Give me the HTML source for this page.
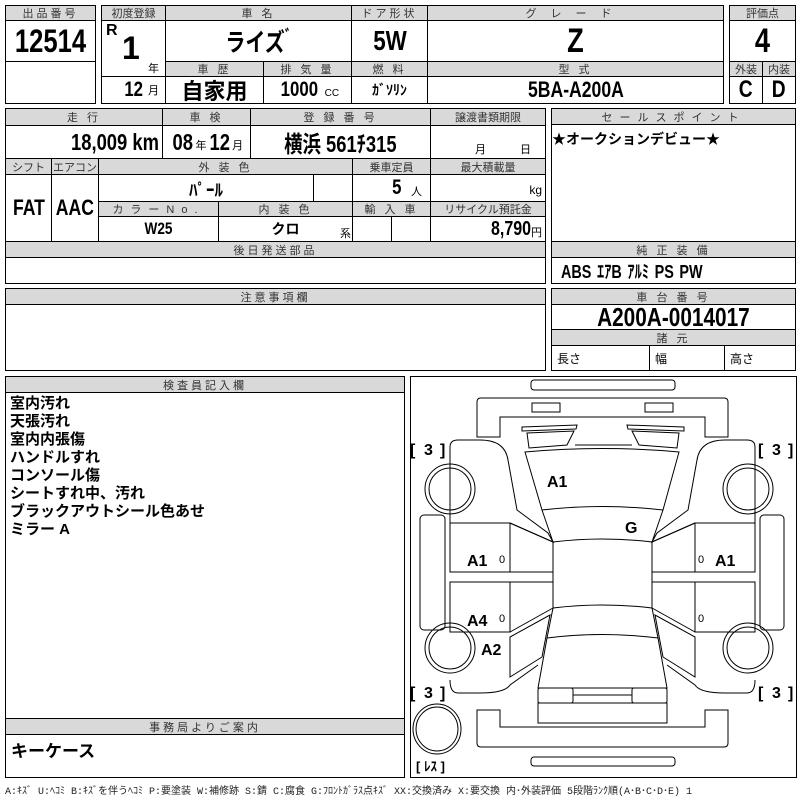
<!DOCTYPE html>
<html><head><meta charset="utf-8"><style>
*{box-sizing:border-box;margin:0;padding:0}
body{width:800px;height:800px;background:#fff;position:relative;overflow:hidden;font-family:"Liberation Sans","Noto Sans CJK JP",sans-serif;color:#000}
.c{position:absolute;border:1px solid #000;display:flex;align-items:center;justify-content:center;white-space:nowrap;overflow:hidden}
.h{background:#d9d9d9;font-size:11px;color:#333;letter-spacing:3px}
.b{font-weight:bold}
.n{display:inline-block;transform:scaleX(.8);font-weight:bold}
.nr{transform-origin:right center}
.t{position:absolute;white-space:nowrap}
</style></head><body>

<!-- box 1 -->
<div class="c h" style="left:5px;top:5px;width:91px;height:16px">出品番号</div>
<div class="c" style="left:5px;top:20px;width:91px;height:42px;font-size:32px"><span class="n">12514</span></div>
<div class="c" style="left:5px;top:61px;width:91px;height:43px"></div>

<!-- box 2 -->
<div class="c h" style="left:101px;top:5px;width:65px;height:16px;letter-spacing:0">初度登録</div>
<div class="c h" style="left:165px;top:5px;width:187px;height:16px">車 名</div>
<div class="c h" style="left:351px;top:5px;width:77px;height:16px">ドア形状</div>
<div class="c h" style="left:427px;top:5px;width:297px;height:16px;letter-spacing:14px">グレード</div>
<div class="c" style="left:101px;top:20px;width:65px;height:57px"></div>
<div class="t b" style="left:106px;top:22px;font-size:16px">R</div>
<div class="t b" style="left:122px;top:30px;font-size:32px">1</div>
<div class="t" style="left:148px;top:60px;font-size:11px">年</div>
<div class="c" style="left:165px;top:20px;width:187px;height:42px;font-size:25px"><span class="n">ライズ<span style="font-size:18px;vertical-align:top">ﾞ</span></span></div>
<div class="c" style="left:351px;top:20px;width:77px;height:42px;font-size:28px"><span class="n">5W</span></div>
<div class="c" style="left:427px;top:20px;width:297px;height:42px;font-size:34px"><span class="n">Z</span></div>
<div class="c h" style="left:165px;top:61px;width:99px;height:16px">車 歴</div>
<div class="c h" style="left:263px;top:61px;width:89px;height:16px">排 気 量</div>
<div class="c h" style="left:351px;top:61px;width:77px;height:16px">燃 料</div>
<div class="c h" style="left:427px;top:61px;width:297px;height:16px">型 式</div>
<div class="c" style="left:101px;top:76px;width:65px;height:28px;justify-content:flex-end;padding-right:6px"><span class="n" style="font-size:21px">12</span><span style="font-size:11px;margin-left:3px">月</span></div>
<div class="c" style="left:165px;top:76px;width:99px;height:28px;font-size:22px;font-weight:bold">自家用</div>
<div class="c" style="left:263px;top:76px;width:89px;height:28px"><span class="n" style="font-size:21px">1000</span><span style="font-size:10px;margin-left:2px;margin-top:6px">CC</span></div>
<div class="c" style="left:351px;top:76px;width:77px;height:28px;font-size:14px;font-weight:bold">ｶﾞｿﾘﾝ</div>
<div class="c" style="left:427px;top:76px;width:297px;height:28px;font-size:22px"><span class="n">5BA-A200A</span></div>

<!-- box 3 -->
<div class="c h" style="left:729px;top:5px;width:67px;height:16px;letter-spacing:0">評価点</div>
<div class="c" style="left:729px;top:20px;width:67px;height:42px;font-size:34px"><span class="n">4</span></div>
<div class="c h" style="left:729px;top:61px;width:34px;height:16px;letter-spacing:0">外装</div>
<div class="c h" style="left:762px;top:61px;width:34px;height:16px;letter-spacing:0">内装</div>
<div class="c" style="left:729px;top:76px;width:34px;height:28px;font-size:24px"><span class="n">C</span></div>
<div class="c" style="left:762px;top:76px;width:34px;height:28px;font-size:24px"><span class="n">D</span></div>

<!-- section 2 -->
<div class="c h" style="left:5px;top:108px;width:158px;height:18px">走 行</div>
<div class="c h" style="left:162px;top:108px;width:89px;height:18px">車 検</div>
<div class="c h" style="left:250px;top:108px;width:181px;height:18px">登 録 番 号</div>
<div class="c h" style="left:430px;top:108px;width:116px;height:18px;letter-spacing:0">譲渡書類期限</div>
<div class="c" style="left:5px;top:125px;width:158px;height:34px;justify-content:flex-end;padding-right:3px"><span class="n nr" style="font-size:23px">18,009 km</span></div>
<div class="c" style="left:162px;top:125px;width:89px;height:34px"><span class="n" style="font-size:23px">08</span><span style="font-size:11px;margin:6px 0 0">年</span><span class="n" style="font-size:23px">12</span><span style="font-size:11px;margin:6px 0 0">月</span></div>
<div class="c" style="left:250px;top:125px;width:181px;height:34px;font-size:23px"><span class="n">横浜 561ﾁ315</span></div>
<div class="c" style="left:430px;top:125px;width:116px;height:34px;font-size:11px;padding-top:14px"><span style="margin-left:30px">月</span><span style="margin-left:34px">日</span></div>

<div class="c h" style="left:5px;top:158px;width:47px;height:17px;letter-spacing:0">シフト</div>
<div class="c h" style="left:51px;top:158px;width:48px;height:17px;letter-spacing:0">エアコン</div>
<div class="c h" style="left:98px;top:158px;width:255px;height:17px">外 装 色</div>
<div class="c h" style="left:352px;top:158px;width:79px;height:17px;letter-spacing:0">乗車定員</div>
<div class="c h" style="left:430px;top:158px;width:116px;height:17px;letter-spacing:0">最大積載量</div>
<div class="c" style="left:5px;top:174px;width:47px;height:68px;font-size:22px"><span class="n">FAT</span></div>
<div class="c" style="left:51px;top:174px;width:48px;height:68px;font-size:22px"><span class="n">AAC</span></div>
<div class="c" style="left:98px;top:174px;width:216px;height:28px;font-size:17px;font-weight:bold">ﾊﾟｰﾙ</div>
<div class="c" style="left:313px;top:174px;width:40px;height:28px"></div>
<div class="c" style="left:352px;top:174px;width:79px;height:28px;justify-content:flex-end;padding-right:8px"><span class="n" style="font-size:21px">5</span><span style="font-size:11px;margin:6px 0 0 8px">人</span></div>
<div class="c" style="left:430px;top:174px;width:116px;height:28px;justify-content:flex-end;padding-right:3px;font-size:12px;padding-top:4px">kg</div>
<div class="c h" style="left:98px;top:201px;width:121px;height:16px;letter-spacing:7px">カラーNo.</div>
<div class="c h" style="left:218px;top:201px;width:135px;height:16px">内 装 色</div>
<div class="c h" style="left:352px;top:201px;width:79px;height:16px">輸 入 車</div>
<div class="c h" style="left:430px;top:201px;width:116px;height:16px;letter-spacing:0">リサイクル預託金</div>
<div class="c" style="left:98px;top:216px;width:121px;height:26px;font-size:17px"><span class="n">W25</span></div>
<div class="c" style="left:218px;top:216px;width:135px;height:26px;font-size:14px;font-weight:bold">クロ</div>
<div class="t" style="left:340px;top:225px;font-size:11px">系</div>
<div class="c" style="left:352px;top:216px;width:40px;height:26px"></div>
<div class="c" style="left:391px;top:216px;width:40px;height:26px"></div>
<div class="c" style="left:430px;top:216px;width:116px;height:26px;justify-content:flex-end;padding-right:3px"><span class="n nr" style="font-size:20px">8,790</span><span style="font-size:11px;margin-top:5px">円</span></div>
<div class="c h" style="left:5px;top:241px;width:541px;height:17px">後日発送部品</div>
<div class="c" style="left:5px;top:257px;width:541px;height:27px"></div>

<!-- sales point -->
<div class="c h" style="left:551px;top:108px;width:245px;height:17px;letter-spacing:7px">セールスポイント</div>
<div class="c" style="left:551px;top:124px;width:245px;height:118px;align-items:flex-start;justify-content:flex-start;font-size:14px;font-weight:bold;padding-top:4px">★オークションデビュー★</div>
<div class="c h" style="left:551px;top:241px;width:245px;height:17px">純 正 装 備</div>
<div class="c" style="left:551px;top:257px;width:245px;height:27px;justify-content:flex-start;padding-left:9px;font-size:18px"><span class="n" style="transform-origin:left center;word-spacing:2px">ABS ｴｱB ｱﾙﾐ PS PW</span></div>

<!-- 注意事項 -->
<div class="c h" style="left:5px;top:288px;width:541px;height:17px">注意事項欄</div>
<div class="c" style="left:5px;top:304px;width:541px;height:67px"></div>
<div class="c h" style="left:551px;top:288px;width:245px;height:17px">車 台 番 号</div>
<div class="c" style="left:551px;top:304px;width:245px;height:26px;font-size:26px"><span class="n">A200A-0014017</span></div>
<div class="c h" style="left:551px;top:329px;width:245px;height:17px">諸 元</div>
<div class="c" style="left:551px;top:345px;width:99px;height:26px;justify-content:flex-start;padding-left:5px;font-size:12px">長さ</div>
<div class="c" style="left:649px;top:345px;width:76px;height:26px;justify-content:flex-start;padding-left:5px;font-size:12px">幅</div>
<div class="c" style="left:724px;top:345px;width:72px;height:26px;justify-content:flex-start;padding-left:5px;font-size:12px">高さ</div>

<!-- 検査員 -->
<div class="c h" style="left:5px;top:376px;width:400px;height:17px">検査員記入欄</div>
<div class="c" style="left:5px;top:392px;width:400px;height:327px;align-items:flex-start;justify-content:flex-start;padding:2px 0 0 4px;font-size:15px;font-weight:bold;line-height:18px;white-space:pre">室内汚れ
天張汚れ
室内内張傷
ハンドルすれ
コンソール傷
シートすれ中、汚れ
ブラックアウトシール色あせ
ミラー A</div>
<div class="c h" style="left:5px;top:718px;width:400px;height:17px">事務局よりご案内</div>
<div class="c" style="left:5px;top:734px;width:400px;height:44px;align-items:flex-start;justify-content:flex-start;padding:2px 0 0 5px;font-size:17px;font-weight:bold">キーケース</div>

<!-- diagram -->
<div class="c" style="left:410px;top:376px;width:387px;height:402px"></div>
<svg style="position:absolute;left:410px;top:375px" width="387" height="402" viewBox="0 0 387 402" fill="none" stroke="#000" stroke-width="1">
<rect x="121" y="5" width="144" height="10" rx="3"/>
<path d="M67,62 L67,27 Q67,23 71,23 L314,23 Q318,23 318,27 L318,62 L295,62 L295,42 L90,42 L90,62 Z"/>
<rect x="122" y="28" width="28" height="9"/>
<rect x="235" y="28" width="28" height="9"/>
<path d="M112,52 L167,50 L166,54 L112,56 Z M117,58 L164,56 L157,70 L119,73 Z"/>
<path d="M274,52 L217,50 L218,54 L274,56 Z M269,58 L222,56 L229,70 L267,73 Z"/>
<path d="M165,70 L222,70"/>
<path d="M115,77 Q192,70 269,77 L253,135 Q192,128 132,135 Z"/>
<path d="M132,135 L143,167 Q192,161 242,167 L253,135"/>
<path d="M143,167 L143,233 Q192,227 242,233 L242,167"/>
<path d="M143,233 L137,263 Q192,256 248,263 L242,233"/>
<path d="M137,263 L128,313 L257,313 L248,263"/>
<rect x="128" y="313" width="35" height="15" rx="2"/>
<rect x="222" y="313" width="35" height="15" rx="2"/>
<path d="M163,320 L222,320"/>
<rect x="128" y="328" width="129" height="20"/>
<path d="M67,335 L67,368 Q67,372 71,372 L314,372 Q318,372 318,368 L318,335 L295,335 L295,352 L90,352 L90,335 Z"/>
<rect x="121" y="382" width="144" height="9" rx="3"/>
<path d="M40,72 Q40,65 48,65 L70,65 Q95,65 98,85 L107,135 L138,158 L143,167 L100,148 L40,148 Z"/>
<path d="M40,148 L100,148 L100,197 L40,197 Z M40,207 L100,207 L100,257 L40,257 Z M40,197 L143,197 M40,207 L143,207"/>
<path d="M100,148 L143,167 M100,257 L143,233 M100,262 L140,240 L132,282 L100,302 Z"/>
<path d="M40,305 Q40,318 48,318 L70,318 Q95,318 100,310 L128,290"/>
<path d="M345,72 Q345,65 337,65 L315,65 Q290,65 287,85 L278,135 L247,158 L242,167 L285,148 L345,148 Z"/>
<path d="M345,148 L285,148 L285,197 L345,197 Z M345,207 L285,207 L285,257 L345,257 Z M345,197 L242,197 M345,207 L242,207"/>
<path d="M285,148 L242,167 M285,257 L242,233 M285,262 L245,240 L253,282 L285,302 Z"/>
<path d="M345,305 Q345,318 337,318 L315,318 Q290,318 285,310 L257,290"/>
<rect x="10" y="140" width="25" height="115" rx="4"/>
<rect x="350" y="140" width="24" height="115" rx="4"/>
<circle cx="40" cy="114" r="25"/><circle cx="40" cy="114" r="21"/>
<circle cx="338" cy="114" r="25"/><circle cx="338" cy="114" r="21"/>
<circle cx="40" cy="273" r="25"/><circle cx="40" cy="273" r="21"/>
<circle cx="338" cy="273" r="25"/><circle cx="338" cy="273" r="21"/>
<ellipse cx="27" cy="354" rx="24" ry="25"/><ellipse cx="27" cy="354" rx="21" ry="22"/>
<g fill="#000" stroke="none" font-family="Liberation Sans" font-weight="bold" font-size="16">
<text x="0" y="80">[</text><text x="14" y="80">3</text><text x="30" y="80">]</text>
<text x="348" y="80">[</text><text x="362" y="80">3</text><text x="378" y="80">]</text>
<text x="0" y="323">[</text><text x="14" y="323">3</text><text x="30" y="323">]</text>
<text x="348" y="323">[</text><text x="362" y="323">3</text><text x="378" y="323">]</text>
<text x="6" y="396" font-size="13">[ <tspan font-family="Noto Sans CJK JP">ﾚｽ</tspan> ]</text>
<text x="137" y="112">A1</text>
<text x="215" y="158">G</text>
<text x="57" y="191">A1</text>
<text x="305" y="191">A1</text>
<text x="57" y="251">A4</text>
<text x="71" y="280">A2</text>
<text x="89" y="188" font-weight="normal" font-size="11">0</text>
<text x="288" y="188" font-weight="normal" font-size="11">0</text>
<text x="89" y="247" font-weight="normal" font-size="11">0</text>
<text x="288" y="247" font-weight="normal" font-size="11">0</text>
</g>
</svg>

<div class="t" style="left:5px;top:782px;font-size:10px;color:#222;font-family:'Liberation Mono','Noto Sans CJK JP',monospace">A:ｷｽﾞ U:ﾍｺﾐ B:ｷｽﾞを伴うﾍｺﾐ P:要塗装 W:補修跡 S:錆 C:腐食 G:ﾌﾛﾝﾄｶﾞﾗｽ点ｷｽﾞ XX:交換済み X:要交換 内･外装評価 5段階ﾗﾝｸ順(A･B･C･D･E) 1</div>
</body></html>
